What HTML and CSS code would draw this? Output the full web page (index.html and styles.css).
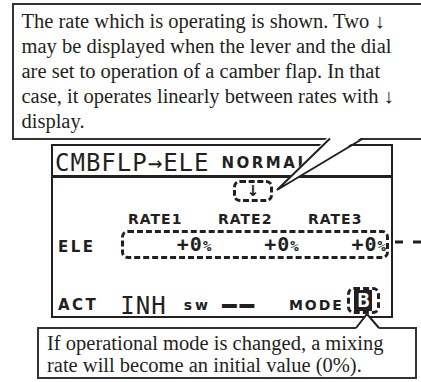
FILE: index.html
```html
<!DOCTYPE html>
<html lang="en">
<head>
    <meta charset="UTF-8">
    <meta name="viewport" content="width=device-width, initial-scale=1.0">
    <title>CMBFLP to ELE</title>
    <link rel="stylesheet" href="styles.css">
</head>
<body>
    <div class="page">
        <div class="note note-top">
            The rate which is operating is shown. Two ↓<br>
            may be displayed when the lever and the dial<br>
            are set to operation of a camber flap. In that<br>
            case, it operates linearly between rates with ↓<br>
            display.
        </div>

        <div class="lcd">
            <div class="lcd-title">
                <span class="big">CMBFLP→ELE</span>
                <span class="small title-cond">NORMAL</span>
            </div>
            <div class="lcd-body">
                <span class="dash-box marker">↓</span>

                <span class="small rate-label col2">RATE1</span>
                <span class="small rate-label col3">RATE2</span>
                <span class="small rate-label col4">RATE3</span>

                <span class="small row-label">ELE</span>
                <div class="dash-box rates">
                    <span class="rate">+0<small>%</small></span>
                    <span class="rate">+0<small>%</small></span>
                    <span class="rate">+0<small>%</small></span>
                </div>

                <div class="act-row">
                    <span class="small act">ACT</span>
                    <span class="big inh">INH</span>
                    <span class="small sw">sw</span>
                    <span class="big dashes">━━</span>
                    <span class="small mode">MODE</span>
                    <span class="dash-box mode-box"><span class="mode-val">B</span></span>
                </div>
            </div>
        </div>

        <div class="note note-bottom">
            If operational mode is changed, a mixing<br>
            rate will become an initial value (0%).
        </div>

        <!-- callout pointers drawn over the boxes -->
        <svg class="leaders" width="421" height="382" viewBox="0 0 421 382">
            <polygon points="329,136 364,136 277,190" fill="#fff"/>
            <polyline points="330,138.5 277,190 363,138.5" fill="none" stroke="#231f20" stroke-width="2"/>
            <polygon points="355,330 380,330 367,313" fill="#fff"/>
            <polyline points="356,328 367,314 379,328" fill="none" stroke="#231f20" stroke-width="2"/>
            <line x1="395" y1="242" x2="421" y2="242" stroke="#231f20" stroke-width="3" stroke-dasharray="8 10"/>
        </svg>
    </div>
</body>
</html>
```

FILE: styles.css
```css
body {
    margin: 0;
    background-color: #fff;
    color: #231f20;
}

.page {
    position: relative;
    width: 421px;
    height: 382px;
    overflow: hidden;
}

.note {
    font-family: "Liberation Serif", serif;
    font-size: 20.5px;
    white-space: nowrap;
    box-sizing: border-box;
    border: 2.5px solid #333;
}

.note-top {
    margin: 3px 0 0 12px;
    width: 440px;
    height: 137px;
    padding: 4px 0 0 7.5px;
    line-height: 25px;
}

.note-bottom {
    margin: 9px 0 0 37px;
    width: 380px;
    height: 52px;
    padding: 3px 0 0 8px;
    line-height: 22px;
}

.lcd {
    margin: 4px 0 0 51px;
    width: 342px;
    height: 174px;
    box-sizing: border-box;
    border: 2px solid #231f20;
    display: flex;
    flex-direction: column;
}

.big {
    font-family: "DejaVu Sans Mono", monospace;
    font-size: 24px;
    line-height: 24px;
    letter-spacing: 1px;
}

.small {
    font-family: "DejaVu Sans", sans-serif;
    font-weight: bold;
    font-size: 14px;
    line-height: 15px;
    letter-spacing: 1px;
}

.lcd-title {
    height: 29px;
    border-bottom: 3px solid #231f20;
    display: flex;
    align-items: flex-end;
    padding-left: 2px;
}

.title-cond {
    margin: 0 0 4px 12px;
    font-size: 15px;
    letter-spacing: 2.5px;
}

.lcd-body {
    flex: 1;
    display: grid;
    grid-template-columns: 68px repeat(3, 90px);
    grid-template-rows: 29px 23px 31px 1fr 31px;
}

.dash-box {
    box-sizing: border-box;
    border: 3px dashed #231f20;
    border-radius: 7px;
}

.marker {
    grid-column: 3;
    grid-row: 1;
    align-self: start;
    margin: 2px 0 0 22px;
    width: 40px;
    height: 22px;
    display: flex;
    align-items: center;
    justify-content: center;
    font-family: "DejaVu Sans", sans-serif;
    font-weight: bold;
    font-size: 15px;
}

.rate-label {
    grid-row: 2;
    align-self: end;
    padding: 0 0 3px 7px;
}

.col2 {
    grid-column: 2;
}

.col3 {
    grid-column: 3;
}

.col4 {
    grid-column: 4;
}

.row-label {
    grid-row: 3;
    grid-column: 1;
    align-self: center;
    padding: 3px 0 0 5px;
    font-size: 15px;
    letter-spacing: 2.5px;
}

.rates {
    grid-row: 3;
    grid-column: 2 / 5;
    margin: 0 2px 0 0;
    height: 29px;
    display: grid;
    grid-template-columns: repeat(3, 1fr);
    justify-items: end;
    align-items: center;
}

.rate {
    font-family: "DejaVu Sans Mono", monospace;
    font-weight: bold;
    font-size: 20px;
    line-height: 20px;
    letter-spacing: 1px;
}

.rate small {
    font-size: 14px;
    letter-spacing: 0;
}

.act-row {
    grid-row: 5;
    grid-column: 1 / 5;
    display: flex;
    align-items: center;
    padding-left: 5px;
}

.act-row > span {
    margin-top: 10px;
}

.act-row > .mode-box {
    margin-top: 0;
}

.act {
    font-size: 15px;
    letter-spacing: 2.5px;
}

.inh {
    margin-left: 22px;
}

.sw {
    margin-left: 17px;
    letter-spacing: 3px;
}

.dashes {
    margin-left: 11px;
    letter-spacing: 3px;
}

.mode {
    margin-left: 32px;
    letter-spacing: 2px;
}

.mode-box {
    margin-left: 3px;
    width: 33px;
    height: 27px;
    display: flex;
    align-items: center;
    justify-content: center;
}

.mode-val {
    background-color: #231f20;
    color: #fff;
    font-family: "DejaVu Sans Mono", monospace;
    font-weight: bold;
    font-size: 20px;
    line-height: 21px;
    padding: 0 3px;
}

.leaders {
    position: absolute;
    top: 0;
    left: 0;
    pointer-events: none;
}
```
